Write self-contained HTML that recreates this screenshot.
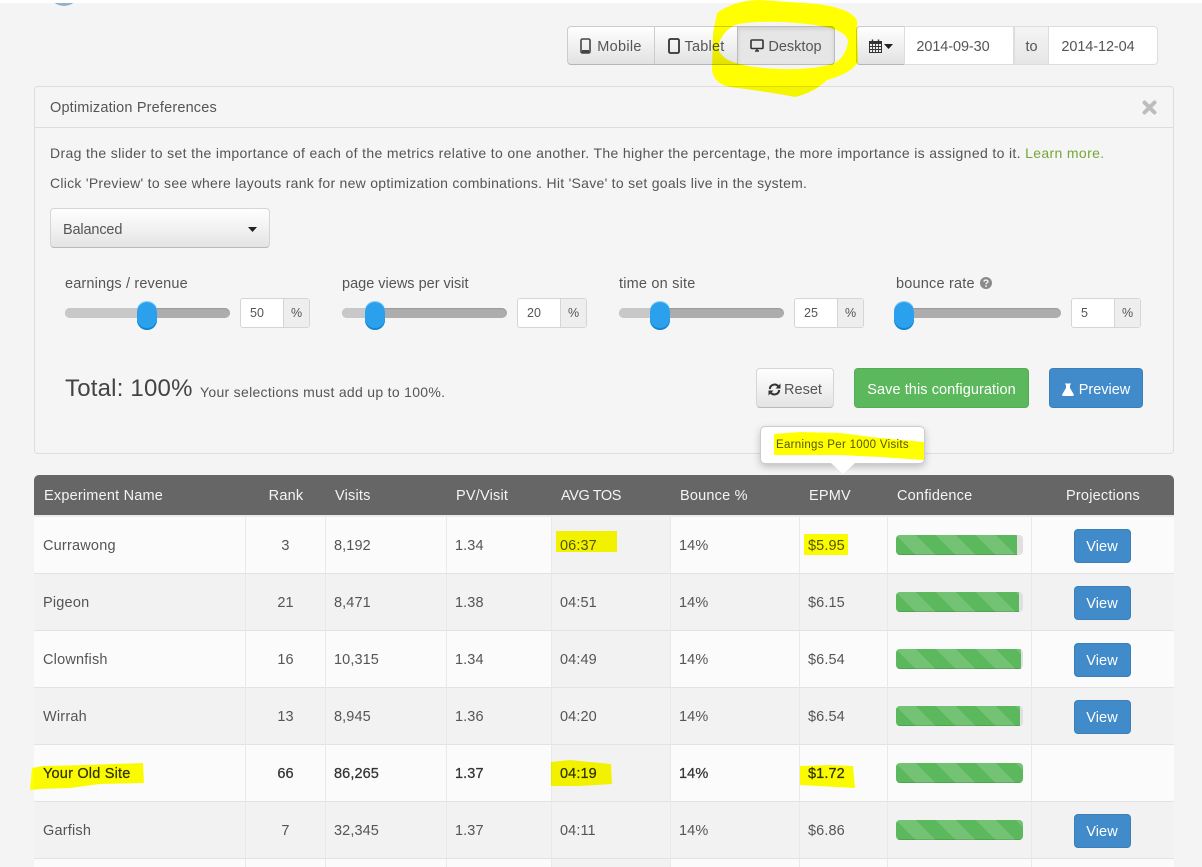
<!DOCTYPE html>
<html>
<head>
<meta charset="utf-8">
<style>
html,body{margin:0;padding:0;overflow:hidden;width:1202px;height:867px;}
body{background:#f4f4f4;font-family:"Liberation Sans",sans-serif;font-size:14.5px;color:#555;}
#w{position:relative;width:1202px;height:867px;overflow:hidden;contain:paint;}
.a{position:absolute;white-space:nowrap;}
.btn{position:absolute;box-sizing:border-box;height:39px;top:26px;background:linear-gradient(#fff,#e2e2e2);border:1px solid #ccc;border-bottom-color:#b5b5b5;color:#555;line-height:41px;text-align:center;white-space:nowrap;}
.inp{position:absolute;box-sizing:border-box;height:39px;top:26px;background:#fff;border:1px solid #ddd;line-height:41px;text-align:center;color:#555;letter-spacing:-.1px;}
.track{position:absolute;top:308px;width:165px;height:10px;border-radius:5px;background:#adadad;box-shadow:inset 0 1px 1px rgba(0,0,0,.12);}
.fill{position:absolute;left:0;top:0;height:10px;border-radius:5px 0 0 5px;background:#c8c8c8;}
.handle{position:absolute;top:301px;width:20px;height:29px;border-radius:10px;background:#2ba1ee;box-shadow:inset 0 -2px 0 #1587d2,inset 0 1px 0 #9ad4f8;}
.num{position:absolute;top:298px;width:70px;height:30px;box-sizing:border-box;border:1px solid #d5d5d5;border-radius:3px;background:#fff;font-size:12.5px;line-height:28px;padding-left:9px;}
.num i{position:absolute;right:0;top:0;width:25px;height:28px;background:#eee;border-left:1px solid #d5d5d5;font-style:normal;text-align:center;}
.lbl{position:absolute;top:276px;letter-spacing:.2px;color:#555;white-space:nowrap;}
table{position:absolute;left:34px;top:475px;width:1140px;border-collapse:separate;border-spacing:0;table-layout:fixed;}
th{height:38px;padding:2px 0 0;background:#666;background-clip:padding-box;color:#f4f4f4;font-weight:normal;text-align:left;border-bottom:2px solid #ececec;letter-spacing:.2px;}
td{height:56px;padding:0;border-bottom:1px solid #e2e2e2;border-right:1px solid #e9e9e9;letter-spacing:.1px;box-sizing:content-box;}
tr.o td{background:#fbfbfb;}
tr.e td{background:#f2f2f2;}
tr.o td.s{background:#f2f2f2;}
td:last-child{border-right:0;}
td.p,td.c{height:54px;padding-top:2px;}
th.p{padding-left:9px;}
td.p{padding-left:8px;}
td.n{padding-left:9px;letter-spacing:.2px;}
.c{text-align:center;}
tr.b td{color:#333;-webkit-text-stroke:.25px #333;}
tr.l td{height:8px;padding:0;border-bottom:0;}
.bar{width:127px;height:20px;margin-left:8px;border-radius:4px;background:#e0e0e0;overflow:hidden;}
.bar div{height:20px;background-color:#5cb85c;box-shadow:inset 0 -1px 0 rgba(0,0,0,.12);background-image:linear-gradient(45deg,rgba(255,255,255,.15) 25%,transparent 25%,transparent 50%,rgba(255,255,255,.15) 50%,rgba(255,255,255,.15) 75%,transparent 75%,transparent);background-size:40px 40px;}
.view{display:block;width:57px;height:34px;margin:0 auto;background:#428bca;border:1px solid #3b7fb9;box-sizing:border-box;border-radius:4px;color:#fff;text-align:center;line-height:34px;position:relative;top:1px;left:-1px;}
.y{position:absolute;left:0;top:0;mix-blend-mode:multiply;pointer-events:none;}
</style>
</head>
<body>
<div id="w">
<div class="a" style="left:0;top:0;width:1202px;height:3px;background:#fff;"></div>
<div class="a" style="left:49px;top:-22px;width:30px;height:28px;border-radius:50%;background:#8fb3cf;clip-path:inset(25px 0 0 0);"></div>

<!-- Device buttons -->
<div class="btn" style="left:567px;width:88px;border-radius:4px 0 0 4px;"><svg width="11" height="16" viewBox="0 0 11 16" style="vertical-align:-3px;margin-right:6px"><rect x="1" y="1" width="9" height="14" rx="1.5" fill="none" stroke="#444" stroke-width="1.6"/><rect x="2" y="12" width="7" height="3" fill="#444"/></svg><span style="letter-spacing:.3px">Mobile</span></div>
<div class="btn" style="left:654px;width:84px;"><svg width="12" height="16" viewBox="0 0 12 16" style="vertical-align:-3px;margin-right:5px"><rect x="1" y="1" width="10" height="14" rx="1.5" fill="none" stroke="#333" stroke-width="1.8"/></svg><span style="letter-spacing:.2px">Tablet</span></div>
<div class="btn" style="left:737px;width:98px;background:#e6e6e6;border-color:#bbb;box-shadow:inset 0 2px 4px rgba(0,0,0,.1);border-radius:0 4px 4px 0;"><svg width="14" height="13" viewBox="0 0 14 13" style="vertical-align:-1px;margin-right:4px"><rect x="1" y="1" width="12" height="8.5" rx="1" fill="none" stroke="#333" stroke-width="1.6"/><path d="M5 12h4M7 10v2" stroke="#333" stroke-width="1.5"/></svg>Desktop</div>

<!-- Date range -->
<div class="btn" style="left:856px;width:49px;border-radius:4px 0 0 4px;"><svg width="13" height="14" viewBox="0 0 13 14" style="vertical-align:-2px"><path d="M.5 2.5h12v11H.5z" fill="none" stroke="#333"/><path d="M.5 2.5h12V5H.5z" fill="#333"/><path d="M.5 7.5h12M.5 10.5h12M3.5 5v8M6.5 5v8M9.5 5v8" stroke="#333" stroke-width=".9"/><path d="M3.5 .5v3M9.5 .5v3" stroke="#333" stroke-width="1.4"/></svg><svg width="9" height="5" viewBox="0 0 9 5" style="vertical-align:2px;margin-left:2px"><path d="M0 0h9L4.500 5z" fill="#222"/></svg></div>
<div class="inp" style="left:904px;width:110px;padding-right:12px;">2014-09-30</div>
<div class="btn" style="left:1014px;width:35px;background:linear-gradient(#f4f4f4,#e6e6e6);border-color:#ddd;">to</div>
<div class="inp" style="left:1048px;width:110px;padding-right:10px;border-radius:0 4px 4px 0;">2014-12-04</div>

<!-- Panel -->
<div class="a" style="left:34px;top:86px;width:1140px;height:368px;box-sizing:border-box;background:#f5f5f5;border:1px solid #ddd;border-radius:4px;"></div>
<div class="a" style="left:35px;top:127px;width:1138px;height:1px;background:#ddd;"></div>
<div class="a" style="left:50px;top:100px;letter-spacing:.17px;">Optimization Preferences</div>
<svg class="a" style="left:1142px;top:100px" width="15" height="15" viewBox="0 0 15 15"><path d="M2.500 2.500l10 10M12.500 2.500l-10 10" stroke="#bdbdbd" stroke-width="4" stroke-linecap="round"/></svg>
<div class="a" style="left:50px;top:145px;font-size:14px;letter-spacing:.35px;color:#555;">Drag the slider to set the importance of each of the metrics relative to one another. The higher the percentage, the more importance is assigned to it. <span style="color:#73a839">Learn more.</span></div>
<div class="a" style="left:50px;top:175px;font-size:14px;letter-spacing:.275px;color:#555;">Click 'Preview' to see where layouts rank for new optimization combinations. Hit 'Save' to set goals live in the system.</div>

<!-- Dropdown -->
<div class="a" style="left:50px;top:208px;width:220px;height:40px;box-sizing:border-box;background:linear-gradient(#fff,#e4e4e4);border:1px solid #d5d5d5;border-bottom-color:#b9b9b9;border-radius:4px;line-height:42px;padding-left:12px;letter-spacing:-.15px;">Balanced<svg style="position:absolute;left:197px;top:18px" width="9" height="5" viewBox="0 0 9 5"><path d="M0 0h9L4.500 5z" fill="#222"/></svg></div>

<!-- Sliders -->
<div class="lbl" style="left:65px;letter-spacing:.15px;">earnings / revenue</div>
<div class="track" style="left:65px;"><div class="fill" style="width:82px"></div></div>
<div class="handle" style="left:137px;"></div>
<div class="num" style="left:240px;">50<i>%</i></div>

<div class="lbl" style="left:342px;letter-spacing:0;">page views per visit</div>
<div class="track" style="left:342px;"><div class="fill" style="width:33px"></div></div>
<div class="handle" style="left:365px;"></div>
<div class="num" style="left:517px;">20<i>%</i></div>

<div class="lbl" style="left:619px;">time on site</div>
<div class="track" style="left:619px;"><div class="fill" style="width:41px"></div></div>
<div class="handle" style="left:650px;"></div>
<div class="num" style="left:794px;">25<i>%</i></div>

<div class="lbl" style="left:896px;">bounce rate <svg width="12" height="12" viewBox="0 0 12 12" style="vertical-align:-1px;margin-left:1px"><circle cx="6" cy="6" r="6" fill="#8a8a8a"/><path d="M4 4.600C4 2.600 8 2.600 8 4.500 8 5.900 6 5.800 6 7.200" fill="none" stroke="#f5f5f5" stroke-width="1.400"/><rect x="5.200" y="8.300" width="1.600" height="1.600" fill="#f5f5f5"/></svg></div>
<div class="track" style="left:896px;"><div class="fill" style="width:8px"></div></div>
<div class="handle" style="left:894px;"></div>
<div class="num" style="left:1071px;">5<i>%</i></div>

<!-- Total -->
<div class="a" style="left:65px;top:375px;font-size:24px;letter-spacing:.2px;color:#444;">Total: 100%</div>
<div class="a" style="left:200px;top:384px;font-size:14px;letter-spacing:.3px;">Your selections must add up to 100%.</div>

<!-- Action buttons -->
<div class="a" style="left:756px;top:368px;width:78px;height:40px;box-sizing:border-box;background:linear-gradient(#fff,#e4e4e4);border:1px solid #d5d5d5;border-bottom-color:#b9b9b9;border-radius:4px;text-align:center;line-height:42px;"><svg width="13" height="13" viewBox="0 0 13 13" style="vertical-align:-2px;margin-right:3px"><path d="M1.800 6A4.800 4.800 0 0 1 10.200 3.200M11.200 7A4.800 4.800 0 0 1 2.800 9.800" fill="none" stroke="#333" stroke-width="2"/><path d="M12.500 .5v5h-5zM.5 12.500v-5h5z" fill="#333"/></svg>Reset</div>
<div class="a" style="left:854px;top:368px;width:175px;height:40px;box-sizing:border-box;background:#5cb85c;border:1px solid #52ad52;border-radius:4px;color:#fff;text-align:center;line-height:42px;letter-spacing:.08px;">Save this configuration</div>
<div class="a" style="left:1049px;top:368px;width:94px;height:40px;box-sizing:border-box;background:#428bca;border:1px solid #3b7fb9;border-radius:4px;color:#fff;text-align:center;line-height:42px;"><svg width="12" height="13" viewBox="0 0 12 13" style="vertical-align:-2px;margin-right:5px"><path d="M3 .5h6v1H8v3.500l3.700 6.300c.4.800 0 1.700-1 1.700H1.300c-1 0-1.400-.9-1-1.700L4 5V1.500H3z" fill="#fff"/></svg>Preview</div>

<!-- Table -->
<table>
<colgroup><col style="width:212px"><col style="width:80px"><col style="width:121px"><col style="width:105px"><col style="width:119px"><col style="width:129px"><col style="width:88px"><col style="width:144px"><col style="width:142px"></colgroup>
<tr>
<th style="padding-left:10px;border-radius:5px 0 0 0">Experiment Name</th><th class="c">Rank</th><th class="p">Visits</th><th class="p">PV/Visit</th><th class="p"><span style="letter-spacing:-.4px">AVG TOS</span></th><th class="p">Bounce %</th><th class="p">EPMV</th><th class="p">Confidence</th><th class="c" style="border-radius:0 5px 0 0">Projections</th>
</tr>
<tr class="o"><td class="p n">Currawong</td><td class="c">3</td><td class="p">8,192</td><td class="p">1.34</td><td class="p s">06:37</td><td class="p">14%</td><td class="p">$5.95</td><td><div class="bar"><div style="width:121px"></div></div></td><td><span class="view">View</span></td></tr>
<tr class="e"><td class="p n">Pigeon</td><td class="c">21</td><td class="p">8,471</td><td class="p">1.38</td><td class="p s">04:51</td><td class="p">14%</td><td class="p">$6.15</td><td><div class="bar"><div style="width:123px"></div></div></td><td><span class="view">View</span></td></tr>
<tr class="o"><td class="p n">Clownfish</td><td class="c">16</td><td class="p">10,315</td><td class="p">1.34</td><td class="p s">04:49</td><td class="p">14%</td><td class="p">$6.54</td><td><div class="bar"><div style="width:125px"></div></div></td><td><span class="view">View</span></td></tr>
<tr class="e"><td class="p n">Wirrah</td><td class="c">13</td><td class="p">8,945</td><td class="p">1.36</td><td class="p s">04:20</td><td class="p">14%</td><td class="p">$6.54</td><td><div class="bar"><div style="width:124px"></div></div></td><td><span class="view">View</span></td></tr>
<tr class="o b"><td class="p n">Your Old Site</td><td class="c">66</td><td class="p">86,265</td><td class="p">1.37</td><td class="p s">04:19</td><td class="p">14%</td><td class="p">$1.72</td><td><div class="bar"><div style="width:127px"></div></div></td><td></td></tr>
<tr class="e"><td class="p n">Garfish</td><td class="c">7</td><td class="p">32,345</td><td class="p">1.37</td><td class="p s">04:11</td><td class="p">14%</td><td class="p">$6.86</td><td><div class="bar"><div style="width:127px"></div></div></td><td><span class="view">View</span></td></tr>
<tr class="o l"><td></td><td></td><td></td><td></td><td class="s"></td><td></td><td></td><td></td><td></td></tr>
</table>

<!-- Tooltip -->
<div class="a" style="left:760px;top:426px;width:165px;height:38px;box-sizing:border-box;background:#fff;border:1px solid #ccc;border-radius:5px;box-shadow:0 3px 8px rgba(0,0,0,.22);font-size:11.500px;line-height:36px;padding-left:15px;color:#555;letter-spacing:.3px;">Earnings Per 1000 Visits</div>
<svg class="a" style="left:831px;top:463px" width="24" height="13" viewBox="0 0 24 13"><path d="M0 0h24L12 11z" fill="#fff"/></svg>

<!-- Yellow marker -->
<svg class="y" width="1202" height="867" viewBox="0 0 1202 867">
<path fill="#ffff00" fill-rule="evenodd" d="M717 13Q735 0 760 0L817 4Q850 8 857 20L858 62Q850 74 827 80Q815 92 795 97Q770 92 730 87Q714 84 712 70L713 33ZM735 25Q722 32 719 44Q716 52 728 60Q745 68 780 69Q815 70 835 63Q846 56 848 42Q848 33 830 28Q815 24 783 22Q750 21 735 25Z"/>
<path fill="#ffff00" d="M32 768L43 766 87 765 143 763 144 783 100 784 70 788 40 789 30 790Z"/>
<rect x="556" y="531" width="61" height="21" fill="#ffff00"/>
<rect x="804" y="534" width="44" height="21" fill="#ffff00"/>
<path fill="#ffff00" d="M551 762L570 760 611 764 612 784 580 786 551 786Z"/>
<path fill="#ffff00" d="M800 766L830 765 853 766 855 788 836 787 800 785Z"/>
<path fill="#ffff00" d="M774 434L800 432 840 433 880 438 924 442 924 460 880 457 840 455 774 455Z"/>
</svg>
</div>
</body>
</html>
